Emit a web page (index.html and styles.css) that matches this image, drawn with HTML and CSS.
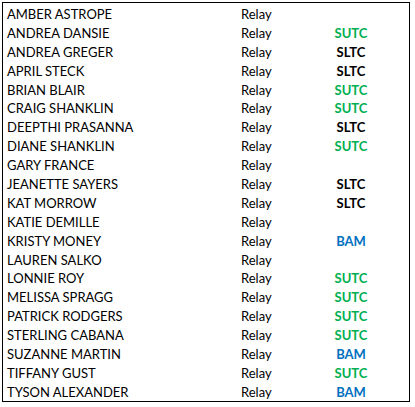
FILE: index.html
```html
<!DOCTYPE html>
<html>
<head>
<meta charset="utf-8">
<link rel="stylesheet" href="styles.css">
</head>
<body>
<div class="sheet">
  <div class="row"><span class="name">AMBER ASTROPE</span><span class="type">Relay</span><span class="code"></span></div>
  <div class="row"><span class="name">ANDREA DANSIE</span><span class="type">Relay</span><span class="code sutc">SUTC</span></div>
  <div class="row"><span class="name">ANDREA GREGER</span><span class="type">Relay</span><span class="code sltc">SLTC</span></div>
  <div class="row"><span class="name">APRIL STECK</span><span class="type">Relay</span><span class="code sltc">SLTC</span></div>
  <div class="row"><span class="name">BRIAN BLAIR</span><span class="type">Relay</span><span class="code sutc">SUTC</span></div>
  <div class="row"><span class="name">CRAIG SHANKLIN</span><span class="type">Relay</span><span class="code sutc">SUTC</span></div>
  <div class="row"><span class="name">DEEPTHI PRASANNA</span><span class="type">Relay</span><span class="code sltc">SLTC</span></div>
  <div class="row"><span class="name">DIANE SHANKLIN</span><span class="type">Relay</span><span class="code sutc">SUTC</span></div>
  <div class="row"><span class="name">GARY FRANCE</span><span class="type">Relay</span><span class="code"></span></div>
  <div class="row"><span class="name">JEANETTE SAYERS</span><span class="type">Relay</span><span class="code sltc">SLTC</span></div>
  <div class="row"><span class="name">KAT MORROW</span><span class="type">Relay</span><span class="code sltc">SLTC</span></div>
  <div class="row"><span class="name">KATIE DEMILLE</span><span class="type">Relay</span><span class="code"></span></div>
  <div class="row"><span class="name">KRISTY MONEY</span><span class="type">Relay</span><span class="code bam">BAM</span></div>
  <div class="row"><span class="name">LAUREN SALKO</span><span class="type">Relay</span><span class="code"></span></div>
  <div class="row"><span class="name">LONNIE ROY</span><span class="type">Relay</span><span class="code sutc">SUTC</span></div>
  <div class="row"><span class="name">MELISSA SPRAGG</span><span class="type">Relay</span><span class="code sutc">SUTC</span></div>
  <div class="row"><span class="name">PATRICK RODGERS</span><span class="type">Relay</span><span class="code sutc">SUTC</span></div>
  <div class="row"><span class="name">STERLING CABANA</span><span class="type">Relay</span><span class="code sutc">SUTC</span></div>
  <div class="row"><span class="name">SUZANNE MARTIN</span><span class="type">Relay</span><span class="code bam">BAM</span></div>
  <div class="row"><span class="name">TIFFANY GUST</span><span class="type">Relay</span><span class="code sutc">SUTC</span></div>
  <div class="row"><span class="name">TYSON ALEXANDER</span><span class="type">Relay</span><span class="code bam">BAM</span></div>
</div>
</body>
</html>
```
FILE: styles.css
```css
html, body {
  margin: 0;
  padding: 0;
  background: #ffffff;
}
body {
  font-family: "Lato", "Liberation Sans", sans-serif;
  font-size: 13px;
  color: #000000;
}
.sheet {
  margin: 2px 0 0 2px;
  width: 408px;
  height: 400px;
  box-sizing: border-box;
  border: 1px solid #000000;
  padding-top: 2px;
}
.row {
  display: grid;
  grid-template-columns: 235px 65px 96px;
  height: 18.9px;
  line-height: 18.9px;
  white-space: nowrap;
}
.name {
  padding-left: 4px;
}
.type {
  padding-left: 3px;
}
.code {
  text-align: center;
  font-weight: bold;
}
.sutc { color: #00b050; }
.sltc { color: #000000; }
.bam { color: #0070c0; }
```
